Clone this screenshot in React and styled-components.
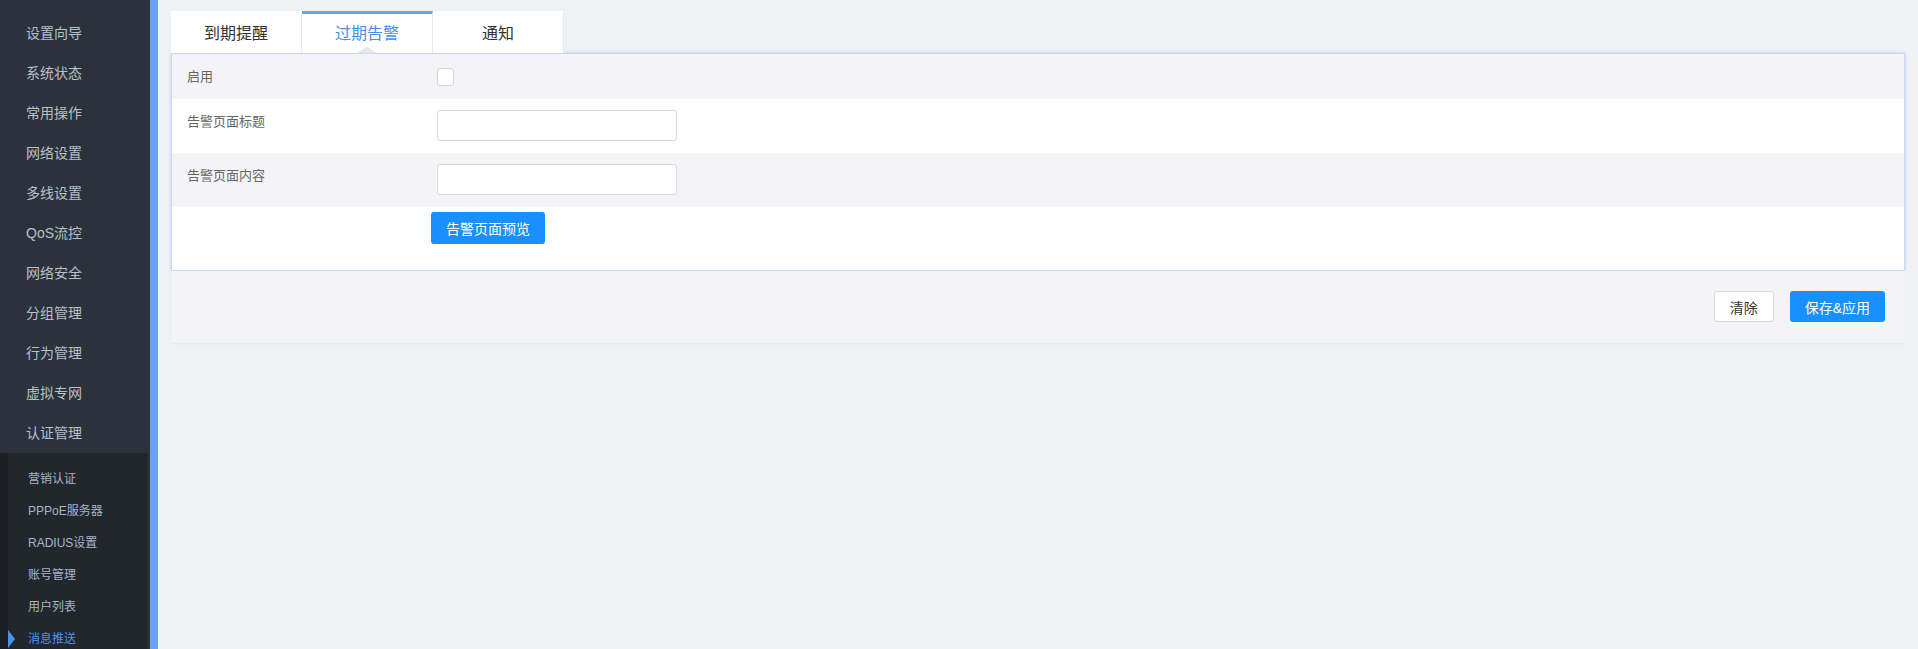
import { useState } from "react";
import styled, { createGlobalStyle } from "styled-components";

const GlobalStyle = createGlobalStyle`
  html, body {
    margin: 0;
    padding: 0;
    background: #f0f1f5;
    font-family: "Liberation Sans", "Noto Sans CJK SC", sans-serif;
  }
  * { box-sizing: border-box; }
`;

const menu = [
  "设置向导", "系统状态", "常用操作", "网络设置", "多线设置", "QoS流控",
  "网络安全", "分组管理", "行为管理", "虚拟专网", "认证管理",
];

const subMenu = ["营销认证", "PPPoE服务器", "RADIUS设置", "账号管理", "用户列表", "消息推送"];

const tabs = ["到期提醒", "过期告警", "通知"];

export default function App() {
  const [tab, setTab] = useState(1);
  const [enabled, setEnabled] = useState(false);

  return (
    <>
      <GlobalStyle />
      <Page>
        <Sidebar>
          <MenuList>
            {menu.map((m) => (
              <MenuItem key={m}>{m}</MenuItem>
            ))}
          </MenuList>
          <SubMenu>
            {subMenu.map((s) => (
              <SubItem key={s} $active={s === "消息推送"}>{s}</SubItem>
            ))}
          </SubMenu>
        </Sidebar>

        <Main>
          <Tabs>
            {tabs.map((t, i) => (
              <Tab key={t} $active={i === tab} onClick={() => setTab(i)}>
                {t}
              </Tab>
            ))}
          </Tabs>

          <Panel>
            <Row $grey $first>
              <Label>启用</Label>
              <Check
                type="checkbox"
                checked={enabled}
                onChange={(e) => setEnabled(e.target.checked)}
              />
            </Row>
            <Row>
              <Label>告警页面标题</Label>
              <Input />
            </Row>
            <Row $grey>
              <Label>告警页面内容</Label>
              <Input />
            </Row>
            <ButtonRow>
              <Label />
              <PrimaryButton $preview>告警页面预览</PrimaryButton>
            </ButtonRow>
          </Panel>

          <Footer>
            <PlainButton>清除</PlainButton>
            <PrimaryButton>保存&amp;应用</PrimaryButton>
          </Footer>
        </Main>
      </Page>
    </>
  );
}

const Page = styled.div`
  display: flex;
  height: 649px;
  overflow: hidden;
`;

const Sidebar = styled.aside`
  width: 158px;
  flex-shrink: 0;
  background: #2b323c;
  border-right: 8px solid #6aa1f4;
  display: flex;
  flex-direction: column;
`;

const MenuList = styled.div`
  padding-top: 13px;
`;

const MenuItem = styled.div`
  height: 40px;
  line-height: 40px;
  padding-left: 26px;
  font-size: 14px;
  color: #b9c0c8;
`;

const SubMenu = styled.div`
  margin-right: 2px;
  padding-top: 10px;
  background: #22272e;
  border-left: 8px solid #1c2025;
  flex: 1;
`;

const SubItem = styled.div`
  position: relative;
  height: 32px;
  line-height: 32px;
  padding-left: 20px;
  font-size: 12px;
  color: ${(p) => (p.$active ? "#4c92ec" : "#a7b4c6")};

  &::before {
    content: "";
    display: ${(p) => (p.$active ? "block" : "none")};
    position: absolute;
    left: 0;
    top: 7px;
    border-left: 7px solid #4c92ec;
    border-top: 9px solid transparent;
    border-bottom: 9px solid transparent;
  }
`;

const Main = styled.main`
  flex: 1;
  padding: 11px 13px 0 13px;
  min-width: 0;
`;

const Tabs = styled.div`
  display: flex;
`;

const Tab = styled.div`
  position: relative;
  width: 131px;
  height: 42px;
  background: #fff;
  border-right: 1px solid #e6e8ee;
  border-top: 3px solid ${(p) => (p.$active ? "#63a8ef" : "#fff")};
  text-align: center;
  line-height: 39px;
  font-size: 16px;
  font-weight: 400;
  color: ${(p) => (p.$active ? "#4a8ee6" : "#333")};
  cursor: pointer;

  &::after {
    content: "";
    display: ${(p) => (p.$active ? "block" : "none")};
    position: absolute;
    left: 50%;
    bottom: 0;
    margin-left: -10px;
    border-bottom: 6px solid #e1e5ee;
    border-left: 10px solid transparent;
    border-right: 10px solid transparent;
  }
`;

const Panel = styled.section`
  background: #fff;
  border: 1px solid #c8d7f6;
  box-shadow: 0 0 3px rgba(90, 140, 235, 0.35);
`;

const Row = styled.div`
  display: flex;
  align-items: ${(p) => (p.$first ? "center" : "flex-start")};
  height: ${(p) => (p.$first ? "45px" : "54px")};
  padding: ${(p) => (p.$first ? "0 15px" : "11px 15px")};
  background: ${(p) => (p.$grey ? "#f4f4f6" : "#fff")};
`;

const ButtonRow = styled.div`
  display: flex;
  height: 63px;
  padding: 5px 15px 0 15px;
`;

const Label = styled.div`
  width: 250px;
  flex-shrink: 0;
  line-height: 24px;
  font-size: 13px;
  color: #666;
`;

const Check = styled.input`
  appearance: none;
  margin: 0;
  width: 17px;
  height: 18px;
  background: #fff;
  border: 1px solid #d4d4d4;
  border-radius: 3px;

  &:checked {
    background: #1890ff;
    border-color: #1890ff;
  }
`;

const Input = styled.input`
  width: 240px;
  height: 31px;
  margin: 0;
  border: 1px solid #d9d9d9;
  border-radius: 3px;
  background: #fff;
  outline: none;
  padding: 0 8px;
  font-size: 13px;
`;

const PrimaryButton = styled.button`
  height: ${(p) => (p.$preview ? "32px" : "31px")};
  padding: 0 ${(p) => (p.$preview ? "15px" : "15px")};
  margin-left: ${(p) => (p.$preview ? "-6px" : "0")};
  border: none;
  border-radius: 3px;
  background: #1890ff;
  color: #fff;
  font-family: inherit;
  font-size: 14px;
  cursor: pointer;
`;

const PlainButton = styled.button`
  height: 31px;
  padding: 0 15px;
  border: 1px solid #d9d9d9;
  border-radius: 3px;
  background: #fff;
  color: #333;
  font-family: inherit;
  font-size: 14px;
  cursor: pointer;
`;

const Footer = styled.div`
  display: flex;
  justify-content: flex-end;
  gap: 16px;
  height: 72px;
  padding: 20px 20px 0 0;
  background: #f4f4f6;
  box-shadow: 0 1px 2px rgba(0, 0, 0, 0.05);
`;
